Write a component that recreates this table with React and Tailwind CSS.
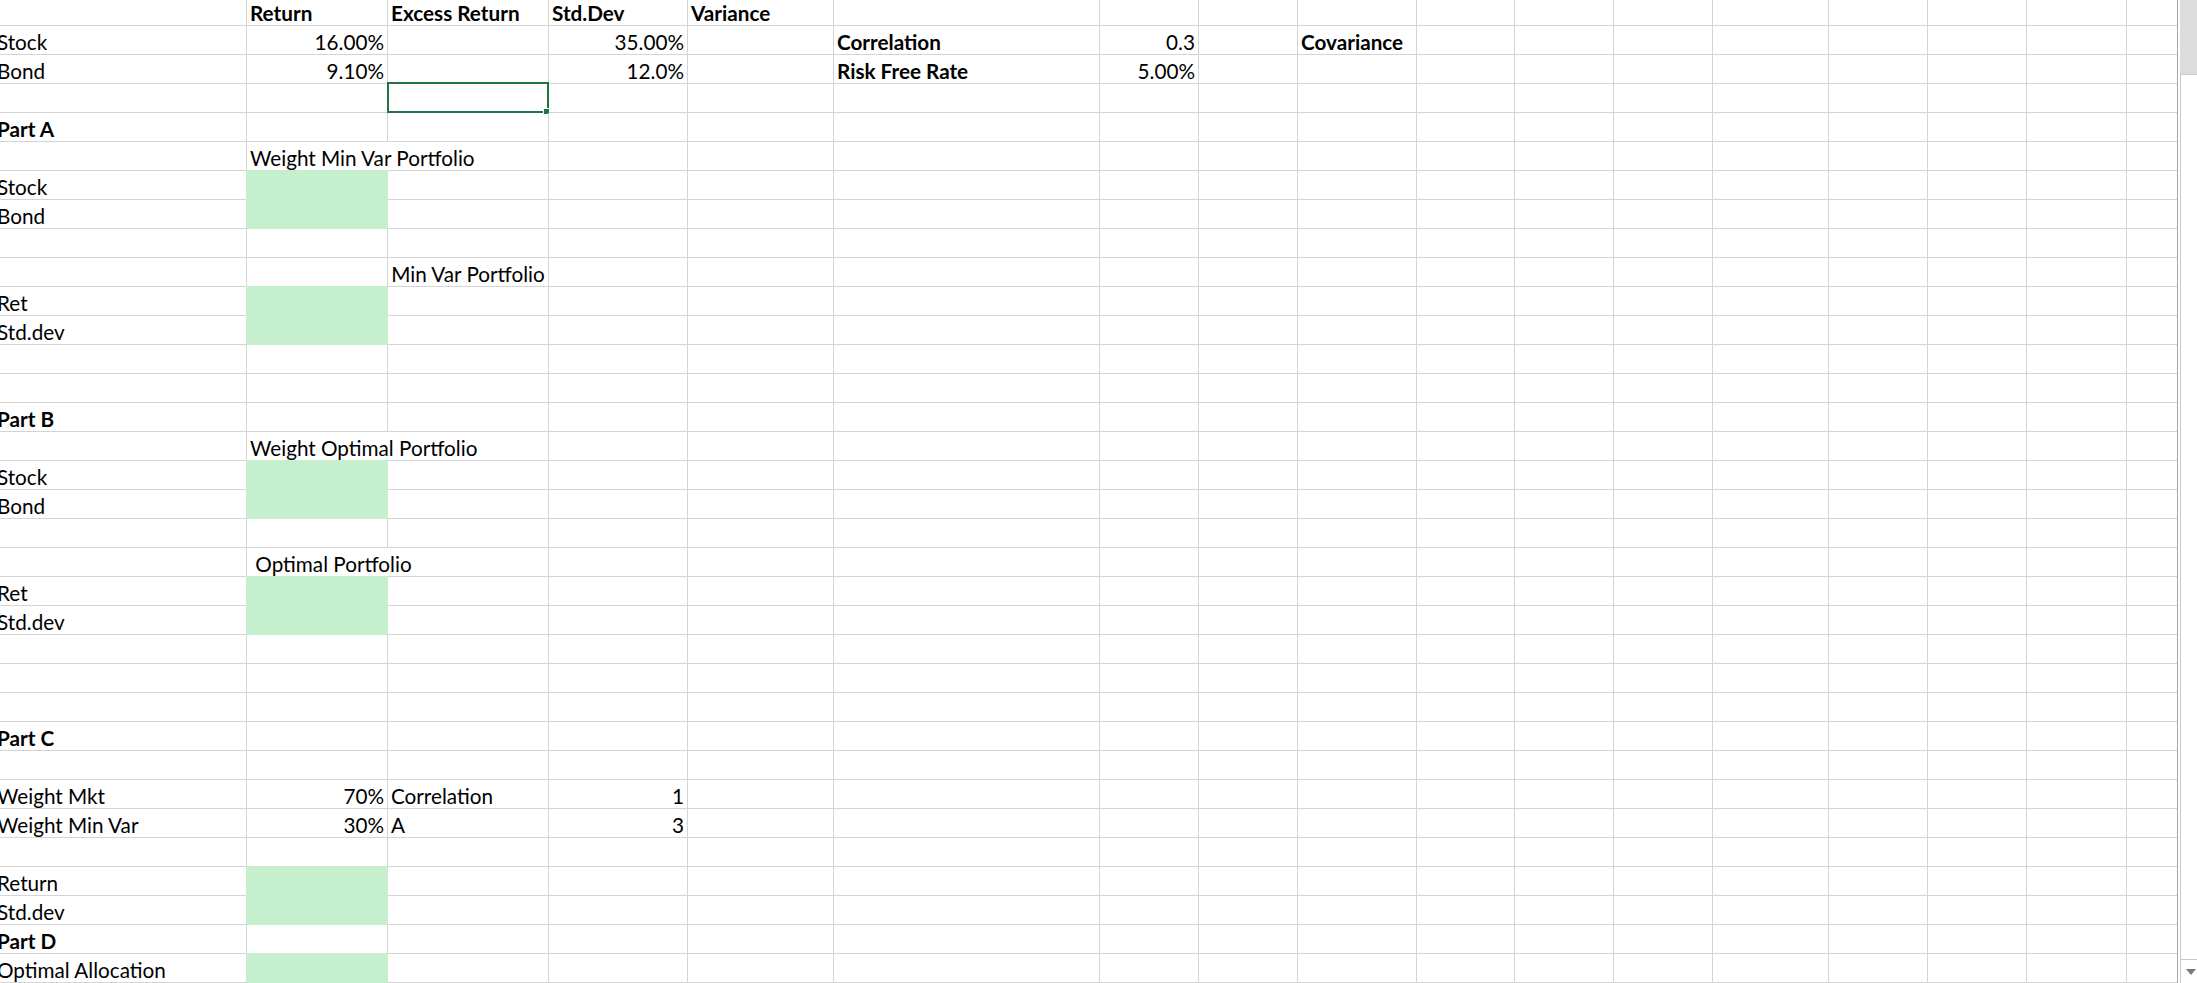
import React from "react";

const COLS = [253, 141, 161, 139, 146, 266, 99, 99, 119, 98, 99, 99, 116, 99, 99, 100, 60];

const ROWS = [
  { 1: { t: "Return", b: 1 }, 2: { t: "Excess Return", b: 1 }, 3: { t: "Std.Dev", b: 1 }, 4: { t: "Variance", b: 1 } },
  { 0: { t: "Stock" }, 1: { t: "16.00%", r: 1 }, 3: { t: "35.00%", r: 1 }, 5: { t: "Correlation", b: 1 }, 6: { t: "0.3", r: 1 }, 8: { t: "Covariance", b: 1 } },
  { 0: { t: "Bond" }, 1: { t: "9.10%", r: 1 }, 3: { t: "12.0%", r: 1 }, 5: { t: "Risk Free Rate", b: 1 }, 6: { t: "5.00%", r: 1 } },
  { 2: { sel: 1 } },
  { 0: { t: "Part A", b: 1 } },
  { 1: { t: "Weight Min Var Portfolio", o: 1 } },
  { 0: { t: "Stock" }, 1: { g: 1 } },
  { 0: { t: "Bond" }, 1: { g: 1 } },
  {},
  { 2: { t: "Min Var Portfolio", c: 1 } },
  { 0: { t: "Ret" }, 1: { g: 1 } },
  { 0: { t: "Std.dev" }, 1: { g: 1 } },
  {},
  {},
  { 0: { t: "Part B", b: 1 } },
  { 1: { t: "Weight Optimal Portfolio", o: 1 } },
  { 0: { t: "Stock" }, 1: { g: 1 } },
  { 0: { t: "Bond" }, 1: { g: 1 } },
  {},
  { 1: { t: "\u00a0Optimal Portfolio", o: 1 } },
  { 0: { t: "Ret" }, 1: { g: 1 } },
  { 0: { t: "Std.dev" }, 1: { g: 1 } },
  {},
  {},
  {},
  { 0: { t: "Part C", b: 1 } },
  {},
  { 0: { t: "Weight Mkt" }, 1: { t: "70%", r: 1 }, 2: { t: "Correlation" }, 3: { t: "1", r: 1 } },
  { 0: { t: "Weight Min Var" }, 1: { t: "30%", r: 1 }, 2: { t: "A" }, 3: { t: "3", r: 1 } },
  {},
  { 0: { t: "Return" }, 1: { g: 1 } },
  { 0: { t: "Std.dev" }, 1: { g: 1 } },
  { 0: { t: "Part D", b: 1 } },
  { 0: { t: "Optimal Allocation" }, 1: { g: 1 } },
];

function Cell({ w, spec }) {
  const s = spec || {};
  let cls =
    "relative h-[29px] shrink-0 border-r border-b px-[3px] pt-[6px] whitespace-nowrap flex items-start ";
  if (s.g) {
    cls += "bg-[#c6efce] border-[#c6efce] shadow-[-1px_-1px_0_0_#c6efce] ";
  } else if (s.o) {
    cls += "border-r-transparent border-b-[#d4d4d4] overflow-visible ";
  } else {
    cls += "border-[#d4d4d4] ";
  }
  if (s.r) cls += "justify-end ";
  else if (s.c) cls += "justify-center ";
  else cls += "justify-start ";
  if (s.b) cls += "font-bold ";
  return (
    <div className={cls} style={{ width: w }}>
      {s.t ? <span className="block leading-[20px]">{s.t}</span> : null}
      {s.sel ? (
        <>
          <div className="pointer-events-none absolute -left-[1px] -top-[2px] -right-[1px] -bottom-[1px] border-2 border-[#217346]" />
          <div className="absolute left-[155px] top-[24px] h-[7px] w-[7px] border border-white bg-[#217346]" />
        </>
      ) : null}
    </div>
  );
}

export default function App() {
  return (
    <div
      className="flex h-[983px] w-[2197px] overflow-hidden bg-white text-[20.7px] text-black"
      style={{ fontFamily: "Lato, 'Liberation Sans', sans-serif" }}
    >
      <div className="h-full flex-1 overflow-hidden">
        <div className="-ml-[6px] -mt-[3px] flex flex-col">
          {ROWS.map((row, ri) => (
            <div key={ri} className="flex">
              {COLS.map((w, ci) => (
                <Cell key={ci} w={w} spec={row[ci]} />
              ))}
            </div>
          ))}
        </div>
      </div>
      <div className="flex h-full w-[20px] shrink-0 border-l border-[#a6a6a6] bg-white pl-[2px]">
        <div className="flex flex-1 flex-col border-l border-[#c8c8c8]">
          <div className="-ml-[1px] h-[75px] border-b border-[#c8c8c8] bg-[#dcdcdc]" />
          <div className="flex-1" />
          <div className="flex h-[24px] items-center justify-center border-t border-[#c8c8c8] pl-[3px]">
            <svg width="10" height="6" viewBox="0 0 10 6">
              <path d="M0 0 L10 0 L5 6 Z" fill="#7a7a7a" />
            </svg>
          </div>
        </div>
      </div>
    </div>
  );
}
